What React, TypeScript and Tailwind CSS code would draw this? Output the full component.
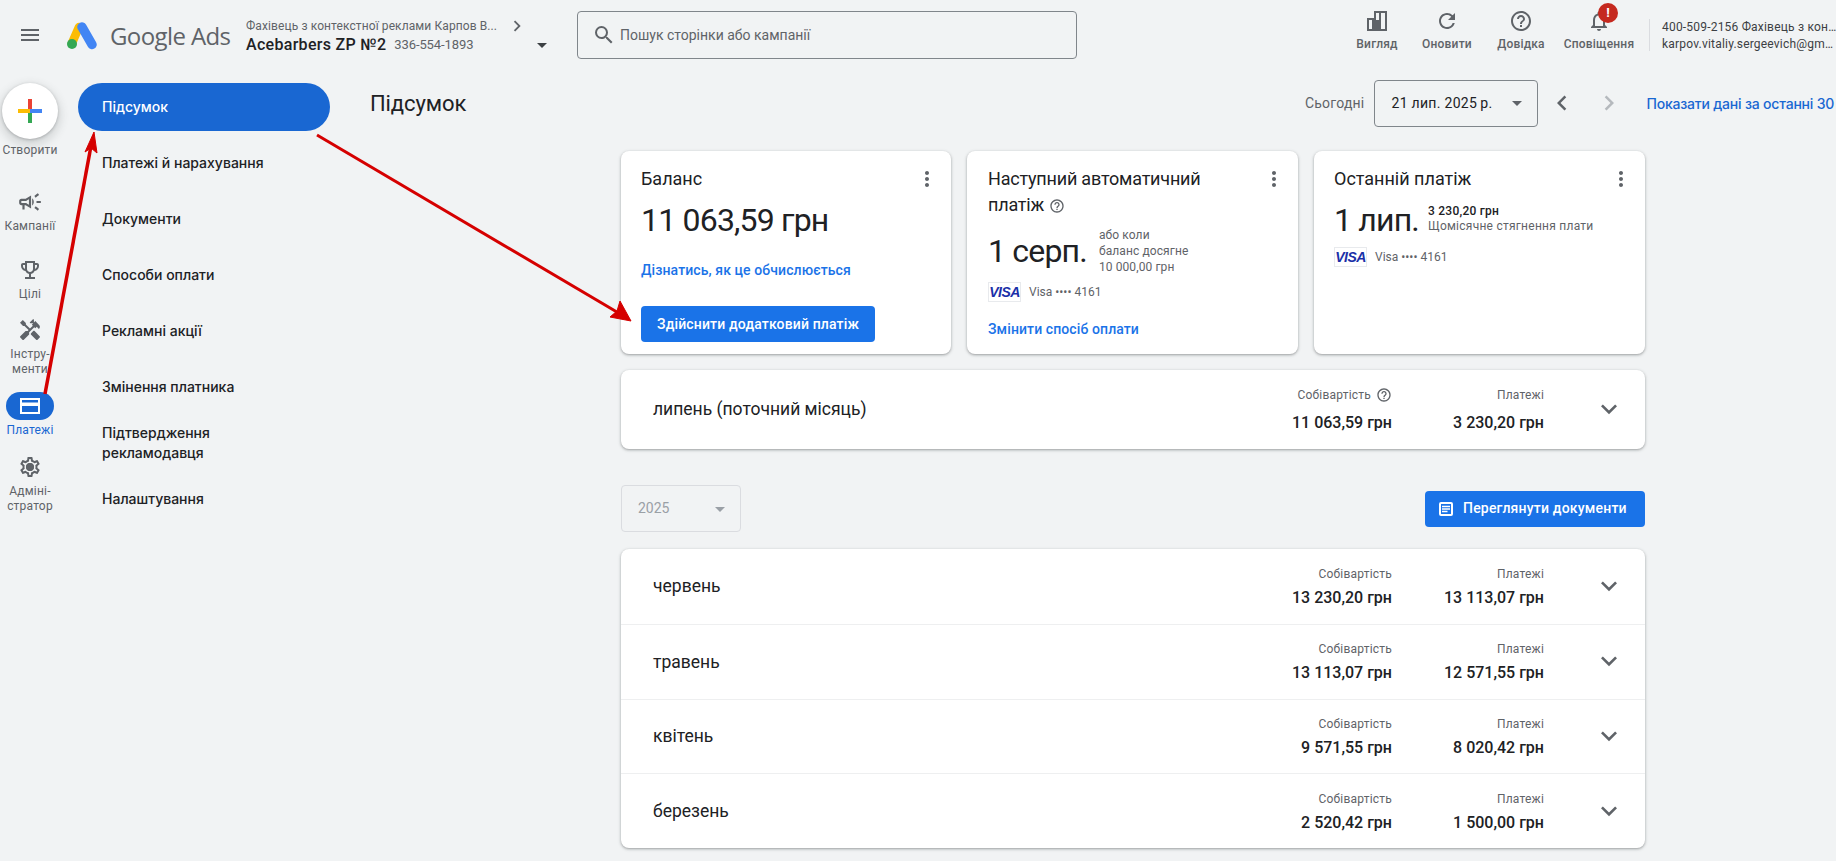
import {
  MdMenu,
  MdSearch,
  MdOutlineCampaign,
  MdOutlineEmojiEvents,
  MdHandyman,
  MdOutlineSettings,
  MdRefresh,
  MdHelpOutline,
  MdOutlineNotifications,
  MdArrowDropDown,
  MdChevronLeft,
  MdChevronRight,
  MdKeyboardArrowDown,
  MdMoreVert,
} from 'react-icons/md';

const RAIL_FONT = 'font-["Roboto",sans-serif]';
const NAV_FONT = 'font-["Inter","Roboto",sans-serif]';

const SUB_NAV = [
  'Платежі й нарахування',
  'Документи',
  'Способи оплати',
  'Рекламні акції',
  'Змінення платника',
];

const MONTHS = [
  { name: 'червень', cost: '13 230,20 грн', paid: '13 113,07 грн' },
  { name: 'травень', cost: '13 113,07 грн', paid: '12 571,55 грн' },
  { name: 'квітень', cost: '9 571,55 грн', paid: '8 020,42 грн' },
  { name: 'березень', cost: '2 520,42 грн', paid: '1 500,00 грн' },
];

function AdsLogo() {
  return (
    <svg width="32" height="28" viewBox="0 0 32 28">
      <path d="M13 5 L6 21" stroke="#fbbc04" strokeWidth="8.5" strokeLinecap="round" />
      <path d="M16 5 L26 22.5" stroke="#4285f4" strokeWidth="9.5" strokeLinecap="round" />
      <circle cx="6" cy="22" r="5" fill="#34a853" />
    </svg>
  );
}

function ViewIcon() {
  return (
    <svg width="22" height="22" viewBox="0 0 22 22" fill="#5f6368">
      <path d="M1 8h7V1h13v20H1V8zm2 2v9h3v-9H3zm5 0v9h5V3h-3v7H8zm7-7v16h4V3h-4z" fillRule="evenodd" />
      <rect x="8" y="10" width="7" height="9" />
    </svg>
  );
}

function CardIcon() {
  return (
    <svg width="24" height="24" viewBox="0 0 24 24" fill="#fff">
      <path fillRule="evenodd" d="M2 4h20v16H2V4zm2 2v2.5h16V6H4zm0 6v6h16v-6H4z" />
    </svg>
  );
}

function DocIcon() {
  return (
    <svg width="18" height="18" viewBox="0 0 18 18" fill="none" stroke="#fff" className="mr-[8px]">
      <rect x="3" y="3" width="12" height="12" rx="1" strokeWidth="2" />
      <path d="M5 6.5h8M5 9h8M5 11.5h5.5" strokeWidth="1.4" />
    </svg>
  );
}

function RailItem({ icon, label, active }: { icon: React.ReactNode; label: React.ReactNode; active?: boolean }) {
  return (
    <div className={`flex flex-col items-center w-[60px] text-[12px] leading-[15px] text-center tracking-[0.2px] ${active ? 'text-[#1967d2]' : 'text-[#5f6368]'}`}>
      {active ? (
        <div className="w-[48px] h-[28px] rounded-full bg-[#1967d2] flex items-center justify-center">{icon}</div>
      ) : (
        <div className="h-[24px] flex items-center justify-center">{icon}</div>
      )}
      <div className={active ? 'mt-[3px]' : 'mt-[5px]'}>{label}</div>
    </div>
  );
}

function Visa({ text }: { text: string }) {
  return (
    <div className="flex items-center h-[20px]">
      <div className="w-[33px] h-[20px] border border-[#e8eaed] bg-white flex items-center justify-center">
        <span className="text-[14px] font-bold italic leading-none tracking-[-0.5px] text-[#1a2fa8] font-['Liberation_Sans',sans-serif]">VISA</span>
      </div>
      <span className="ml-[8px] text-[12px] text-[#5f6368]">{text}</span>
    </div>
  );
}

function Card({ children, className }: { children: React.ReactNode; className: string }) {
  return (
    <div className={`relative bg-white rounded-[8px] shadow-[0_1px_2px_rgba(60,64,67,0.3),0_1px_3px_1px_rgba(60,64,67,0.15)] pt-[15px] ${className}`}>
      <MdMoreVert className="absolute top-[16px] right-[12px] text-[#5f6368]" size={24} />
      {children}
    </div>
  );
}

function Figure({ label, value, help, gap }: { label: string; value: string; help?: boolean; gap: string }) {
  return (
    <div className="flex flex-col items-end">
      <div className="flex items-center text-[12px] h-[18px] text-[#5f6368] tracking-[0.2px]">
        {label}
        {help && <MdHelpOutline className="ml-[5px]" size={16} />}
      </div>
      <div className={`${gap} text-[16px] leading-[20px] font-medium text-[#202124] whitespace-nowrap`}>{value}</div>
    </div>
  );
}

function MonthRow({ name, cost, paid, help, border, className, gap }: { name: string; cost: string; paid: string; help?: boolean; border?: boolean; className?: string; gap: string }) {
  return (
    <div className={`flex items-center pl-[32px] ${border ? 'border-t border-[#eeeff0]' : ''} ${className ?? ''}`}>
      <div className="flex-1 text-[17.5px] text-[#202124]">{name}</div>
      <div className="w-[150px]">
        <Figure label="Собівартість" value={cost} help={help} gap={gap} />
      </div>
      <div className="w-[152px]">
        <Figure label="Платежі" value={paid} gap={gap} />
      </div>
      <div className="w-[101px] flex justify-end pr-[20px]">
        <MdKeyboardArrowDown className="text-[#5f6368] -mt-[1px]" size={32} />
      </div>
    </div>
  );
}

export default function App() {
  return (
    <div className={`relative w-[1836px] h-[861px] overflow-hidden bg-[#f1f3f4] text-[#202124] ${RAIL_FONT}`}>
      {/* top bar */}
      <header className="h-[71px] flex items-start">
        <div className="w-[66px] pt-[23px] pl-[18px] shrink-0">
          <MdMenu size={24} className="text-[#5f6368]" />
        </div>
        <div className="flex items-center w-[180px] pt-[22px] shrink-0">
          <AdsLogo />
          <span className="ml-[12px] text-[24px] leading-[28px] text-[#5f6368] font-['Open_Sans',sans-serif] tracking-[-0.6px] whitespace-nowrap">Google Ads</span>
        </div>
        <div className="w-[331px] pt-[17px] shrink-0">
          <div className="flex items-center h-[18px] text-[12px] text-[#5f6368] tracking-[0.1px] w-[278px] justify-between">
            <span className="truncate w-[258px]">Фахівець з контекстної реклами Карпов В...</span>
            <MdChevronRight size={22} className="-mr-[4px]" />
          </div>
          <div className="flex items-center h-[19px] w-[310px]">
            <span className="text-[16px] text-[#202124] font-medium tracking-[0.3px] whitespace-nowrap">Acebarbers ZP №2</span>
            <span className="ml-[8px] text-[13px] text-[#5f6368] tracking-[-0.1px]">336-554-1893</span>
            <MdArrowDropDown size={24} className="ml-auto text-[#3c4043] mr-[2px]" />
          </div>
        </div>
        <div className="mt-[11px] w-[500px] h-[48px] shrink-0 border border-[#80868b] rounded-[4px] flex items-center pl-[14px]">
          <MdSearch size={24} className="text-[#5f6368]" />
          <span className="ml-[4px] text-[14px] text-[#5f6368]">Пошук сторінки або кампанії</span>
        </div>
        <div className="ml-auto flex items-start pt-[9px] shrink-0">
          <div className="w-[68px] flex flex-col items-center text-[12px] font-medium text-[#5f6368] tracking-[0.2px]">
            <div className="h-[24px] flex items-center"><ViewIcon /></div>
            <div className="mt-[2px]">Вигляд</div>
          </div>
          <div className="w-[72px] flex flex-col items-center text-[12px] font-medium text-[#5f6368] tracking-[0.2px]">
            <MdRefresh size={24} />
            <div className="mt-[2px]">Оновити</div>
          </div>
          <div className="w-[76px] flex flex-col items-center text-[12px] font-medium text-[#5f6368] tracking-[0.2px]">
            <MdHelpOutline size={24} />
            <div className="mt-[2px]">Довідка</div>
          </div>
          <div className="w-[80px] flex flex-col items-center text-[12px] font-medium text-[#5f6368] tracking-[0.2px]">
            <div className="relative">
              <MdOutlineNotifications size={24} />
              <span className="absolute -top-[6px] left-[11px] w-[20px] h-[20px] rounded-full bg-[#c5291f] text-white text-[13px] font-bold leading-[20px] text-center">!</span>
            </div>
            <div className="mt-[2px] whitespace-nowrap">Сповіщення</div>
          </div>
          <div className="ml-[10px] mt-[10px] h-[32px] border-l border-[#dadce0]" />
          <div className="ml-[12px] w-[174px] pt-[10px] text-[12px] leading-[17px] text-[#3c4043] tracking-[0.2px] whitespace-nowrap">
            <div>400-509-2156 Фахівець з кон…</div>
            <div>karpov.vitaliy.sergeevich@gm…</div>
          </div>
        </div>
      </header>

      <div className="flex">
        {/* left rail */}
        <aside className="w-[60px] shrink-0 pt-[12px] flex flex-col items-center">
          <div className="w-[56px] h-[56px] rounded-full bg-white shadow-[0_1px_3px_rgba(60,64,67,0.3),0_4px_8px_3px_rgba(60,64,67,0.15)] flex items-center justify-center">
            <svg width="24" height="24" viewBox="0 0 24 24">
              <rect x="10" y="0" width="4" height="12" fill="#ea4335" />
              <rect x="10" y="12" width="4" height="12" fill="#34a853" />
              <rect x="0" y="10" width="12" height="4" fill="#fbbc04" />
              <rect x="12" y="10" width="12" height="4" fill="#4285f4" />
            </svg>
          </div>
          <div className="mt-[4px] text-[12px] leading-[15px] text-[#5f6368] tracking-[0.2px]">Створити</div>
          <div className="mt-[32px]">
            <RailItem icon={<MdOutlineCampaign size={26} />} label="Кампанії" />
          </div>
          <div className="mt-[24px]">
            <RailItem icon={<MdOutlineEmojiEvents size={24} />} label="Цілі" />
          </div>
          <div className="mt-[16px]">
            <RailItem icon={<MdHandyman size={24} />} label={<>Інстру-<br />менти</>} />
          </div>
          <div className="mt-[15px]">
            <RailItem active icon={<CardIcon />} label="Платежі" />
          </div>
          <div className="mt-[17px]">
            <RailItem
              icon={
                <span className="relative flex">
                  <MdOutlineSettings size={24} />
                  <span className="absolute top-[8px] left-[8px] w-[8px] h-[8px] rounded-full bg-[#5f6368]" />
                </span>
              }
              label={<>Адміні-<br />стратор</>}
            />
          </div>
        </aside>

        {/* billing menu */}
        <nav className={`w-[270px] shrink-0 pt-[12px] pl-[18px] text-[14px] font-medium ${NAV_FONT}`}>
          <div className="w-[252px] h-[48px] rounded-full bg-[#1967d2] text-white flex items-center pl-[24px] pb-[1px]">Підсумок</div>
          <div className="pl-[24px] mt-[3px]">
            {SUB_NAV.map((item) => (
              <div key={item} className="h-[56px] flex items-center">{item}</div>
            ))}
            <div className="mt-[9px] leading-[20px]">Підтвердження<br />рекламодавця</div>
            <div className="mt-[26px] leading-[20px]">Налаштування</div>
          </div>
        </nav>

        {/* content */}
        <main className="flex-1 min-w-0">
          <div className="flex items-center h-[56px] mt-[4px] whitespace-nowrap">
            <h1 className="w-[100px] text-[22px] font-normal text-[#202124] ml-[40px] tracking-[-0.1px]">Підсумок</h1>
            <span className="ml-[835px] text-[14px] text-[#5f6368] tracking-[0.2px]">Сьогодні</span>
            <div className="ml-[10px] w-[164px] h-[47px] shrink-0 border border-[#80868b] rounded-[4px] flex items-center pl-[16px] text-[14px] tracking-[0.3px]">
              21 лип. 2025{'\u2009'}р.
              <MdArrowDropDown size={24} className="ml-auto mr-[8px] text-[#5f6368]" />
            </div>
            <MdChevronLeft size={30} className="ml-[9px] shrink-0 text-[#5f6368]" />
            <MdChevronRight size={30} className="ml-[17px] shrink-0 text-[#b5b9bd]" />
            <span className={`ml-[22px] text-[14px] font-medium text-[#1967d2] tracking-[-0.2px] ${NAV_FONT}`}>Показати дані за останні 30</span>
          </div>

          <div className="ml-[291px] w-[1024px] mt-[20px]">
            <div className="flex gap-[16px] h-[203px]">
              <Card className="w-[330px] pl-[20px]">
                <div className="text-[18px] leading-[26px]">Баланс</div>
                <div className="mt-[8px] text-[32px] leading-[40px] tracking-[-0.8px] whitespace-nowrap">11 063,59 грн</div>
                <div className="mt-[20px] text-[14px] font-medium text-[#1a73e8] tracking-[0.1px]">Дізнатись, як це обчислюється</div>
                <div className="mt-[25px] w-[234px] h-[36px] rounded-[4px] bg-[#1a73e8] text-white text-[14px] font-medium tracking-[0.15px] flex items-center justify-center">Здійснити додатковий платіж</div>
              </Card>
              <Card className="w-[331px] pl-[21px]">
                <div className="text-[18px] leading-[26px] w-[240px] tracking-[-0.2px]">
                  Наступний автоматичний платіж
                  <MdHelpOutline className="inline ml-[5px] text-[#5f6368]" size={16} />
                </div>
                <div className="flex items-center mt-[9px]">
                  <div className="text-[32px] leading-[48px] tracking-[-0.8px] whitespace-nowrap">1 серп.</div>
                  <div className="ml-[12px] text-[12px] leading-[16px] text-[#5f6368] tracking-[0.1px] -mt-[1px]">
                    або коли<br />баланс досягне<br />10 000,00 грн
                  </div>
                </div>
                <div className="mt-[7px]"><Visa text="Visa •••• 4161" /></div>
                <div className="mt-[17px] text-[14px] font-medium text-[#1a73e8] tracking-[0.1px]">Змінити спосіб оплати</div>
              </Card>
              <Card className="w-[331px] pl-[20px]">
                <div className="text-[18px] leading-[26px]">Останній платіж</div>
                <div className="flex items-center mt-[8px]">
                  <div className="text-[32px] leading-[40px] tracking-[-0.8px] whitespace-nowrap">1 лип.</div>
                  <div className="ml-[9px] text-[12px] leading-[15px] tracking-[0.25px] -mt-[2px]">
                    <div className="font-medium">3 230,20 грн</div>
                    <div className="text-[#5f6368]">Щомісячне стягнення плати</div>
                  </div>
                </div>
                <div className="mt-[7px]"><Visa text="Visa •••• 4161" /></div>
              </Card>
            </div>

            <div className="mt-[16px] bg-white rounded-[8px] shadow-[0_1px_2px_rgba(60,64,67,0.3),0_1px_3px_1px_rgba(60,64,67,0.15)]">
              <MonthRow name="липень (поточний місяць)" cost="11 063,59 грн" paid="3 230,20 грн" help gap="mt-[9px]" className="h-[79px]" />
            </div>

            <div className="mt-[36px] flex items-center justify-between h-[47px]">
              <div className="w-[120px] h-[47px] rounded-[4px] border border-[#dadce0] flex items-center pl-[16px] text-[14px] text-[#9aa0a6]">
                2025
                <MdArrowDropDown size={24} className="ml-auto mr-[8px]" />
              </div>
              <div className="w-[220px] h-[36px] rounded-[4px] bg-[#1a73e8] text-white text-[14px] font-medium tracking-[0.2px] flex items-center pl-[12px] whitespace-nowrap">
                <DocIcon />
                Переглянути документи
              </div>
            </div>

            <div className="mt-[17px] bg-white rounded-[8px] shadow-[0_1px_2px_rgba(60,64,67,0.3),0_1px_3px_1px_rgba(60,64,67,0.15)]">
              {MONTHS.map((m, i) => (
                <MonthRow key={m.name} name={m.name} cost={m.cost} paid={m.paid} border={i > 0} gap="mt-[5px]" className="h-[74.75px]" />
              ))}
            </div>
          </div>
        </main>
      </div>

      {/* red annotation arrows */}
      <svg className="absolute inset-0 pointer-events-none" width="1836" height="861">
        <path d="M45 394 L91 146" stroke="#d50000" strokeWidth="3.5" fill="none" />
        <path d="M94 132 L85 152 L91 148 L97 153 Z" fill="#d50000" stroke="#d50000" strokeWidth="1" />
        <path d="M317 135 L622 315" stroke="#d50000" strokeWidth="3" fill="none" />
        <path d="M631 321 L610 317 L617 311 L620 301 Z" fill="#d50000" stroke="#d50000" strokeWidth="1" />
      </svg>
    </div>
  );
}
